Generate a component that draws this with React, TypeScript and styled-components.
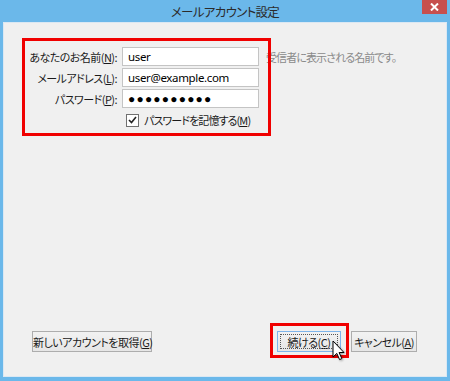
import React, {FC} from 'react';
import styled, {createGlobalStyle} from 'styled-components';

const GlobalStyle = createGlobalStyle`
  html, body {
    margin: 0;
    padding: 0;
    background: #fff;
  }
  body {
    font-family: "Noto Sans", "Noto Sans CJK JP", sans-serif;
  }
`;

const jp = `"Noto Sans CJK JP", "Noto Sans", sans-serif`;

const Window = styled.div`
  position: relative;
  width: 450px;
  height: 381px;
  box-sizing: border-box;
  background: #6bb8ea;
  padding: 0 3px 4px 3px;
  display: flex;
  flex-direction: column;
  overflow: hidden;
`;

const TitleBar = styled.div`
  height: 22px;
  flex: none;
  display: flex;
  align-items: center;
  justify-content: center;
  position: relative;
  .title {
    font-family: ${jp};
    font-size: 12.5px;
    font-feature-settings: "palt";
    color: #2b2b2b;
    letter-spacing: -0.7px;
    margin-top: 1px;
  }
`;

const CloseButton = styled.div`
  position: absolute;
  top: 0;
  right: 0;
  width: 25px;
  height: 14px;
  background: #c74f4e;
  display: flex;
  align-items: center;
  justify-content: center;
`;

const Client = styled.div`
  flex: 1;
  background: #f0f0f0;
  border: 1px solid #dbe8f3;
  display: flex;
  flex-direction: column;
`;

const Form = styled.div`
  display: grid;
  grid-template-columns: 113px 137px auto;
  column-gap: 5px;
  row-gap: 2px;
  padding: 24px 0 0 0;
  align-items: center;
`;

const Label = styled.label`
  font-family: ${jp};
  font-size: 11px;
  letter-spacing: -0.55px;
  font-feature-settings: "palt";
  color: #1a1a1a;
  text-align: right;
  white-space: nowrap;
  u {
    text-decoration: underline;
    text-underline-offset: 1px;
  }
`;

const TextBox = styled.div<{$dots?: boolean}>`
  height: 19px;
  box-sizing: border-box;
  border: 1px solid #c4c4c4;
  background: #fff;
  padding: 0 5px;
  display: flex;
  align-items: center;
  font-family: "Noto Sans", sans-serif;
  font-size: ${(p) => (p.$dots ? '12px' : '11.5px')};
  letter-spacing: ${(p) => (p.$dots ? '1.2px' : '-0.35px')};
  color: #000;
  white-space: nowrap;
  overflow: hidden;
`;

const Hint = styled.div`
  font-family: ${jp};
  font-size: 11px;
  letter-spacing: -0.9px;
  font-feature-settings: "palt";
  color: #8a8a8a;
  white-space: nowrap;
  padding-left: 2px;
`;

const CheckRow = styled.div`
  grid-column: 2 / 4;
  display: flex;
  align-items: center;
  gap: 5px;
  padding-left: 4px;
  margin-top: 2px;
  font-family: ${jp};
  font-size: 11px;
  letter-spacing: -0.9px;
  font-feature-settings: "palt";
  color: #1a1a1a;
  white-space: nowrap;
  u {
    text-decoration: underline;
    text-underline-offset: 1px;
  }
`;

const CheckBox = styled.div`
  width: 13px;
  height: 13px;
  box-sizing: border-box;
  border: 1px solid #707070;
  background: #fff;
  display: flex;
  align-items: center;
  justify-content: center;
`;

const Spacer = styled.div`
  flex: 1;
`;

const Footer = styled.div`
  display: flex;
  align-items: center;
  padding: 0 29px 24px 28px;
  gap: 10px;
`;

const Button = styled.button<{$default?: boolean; $w: number}>`
  width: ${(p) => p.$w}px;
  height: 21px;
  box-sizing: border-box;
  padding: 0;
  border: 1px solid ${(p) => (p.$default ? '#7eb4ea' : '#adadad')};
  background: linear-gradient(#f2f2f2, #e6e6e6);
  font-family: ${jp};
  font-size: 11px;
  letter-spacing: -0.5px;
  font-feature-settings: "palt";
  color: #1a1a1a;
  white-space: nowrap;
  text-align: center;
  position: relative;
  u {
    text-decoration: underline;
    text-underline-offset: 1px;
  }
  ${(p) =>
    p.$default &&
    `
    &::after {
      content: "";
      position: absolute;
      inset: 2px;
      border: 1px dotted #555;
    }
  `}
`;

const Highlight = styled.div<{$x: number; $y: number; $w: number; $h: number}>`
  position: absolute;
  left: ${(p) => p.$x}px;
  top: ${(p) => p.$y}px;
  width: ${(p) => p.$w}px;
  height: ${(p) => p.$h}px;
  box-sizing: border-box;
  border: 3px solid #f00000;
  pointer-events: none;
`;

const Cursor = styled.svg`
  position: absolute;
  left: 332px;
  top: 340px;
  filter: drop-shadow(1px 1px 1px rgba(0, 0, 0, 0.35));
`;

const Field: FC<{label: React.ReactNode; value: string; dots?: boolean; hint?: string}> = ({
  label,
  value,
  dots,
  hint,
}) => (
  <>
    <Label>{label}</Label>
    <TextBox $dots={dots}>{value}</TextBox>
    <Hint>{hint}</Hint>
  </>
);

const App: FC = () => (
  <>
    <GlobalStyle />
    <Window>
      <TitleBar>
        <span className="title">メールアカウント設定</span>
        <CloseButton>
          <svg width="9" height="8" viewBox="0 0 9 8">
            <path d="M1 0.5 L8 7.5 M8 0.5 L1 7.5" stroke="#fff" strokeWidth="2" />
          </svg>
        </CloseButton>
      </TitleBar>
      <Client>
        <Form>
          <Field
            label={
              <>
                あなたのお名前(<u>N</u>):
              </>
            }
            value="user"
            hint="受信者に表示される名前です。"
          />
          <Field
            label={
              <>
                メールアドレス(<u>L</u>):
              </>
            }
            value="user@example.com"
          />
          <Field
            label={
              <>
                パスワード(<u>P</u>):
              </>
            }
            value="●●●●●●●●●●"
            dots
          />
          <CheckRow>
            <CheckBox>
              <svg width="9" height="8" viewBox="0 0 9 8">
                <path d="M1 4 L3.5 6.5 L8 1" fill="none" stroke="#222" strokeWidth="1.6" />
              </svg>
            </CheckBox>
            <span>
              パスワードを記憶する(<u>M</u>)
            </span>
          </CheckRow>
        </Form>
        <Spacer />
        <Footer>
          <Button $w={120}>
            <span>
              新しいアカウントを取得(<u>G</u>)
            </span>
          </Button>
          <Spacer />
          <Button $w={64} $default>
            <span>
              続ける(<u>C</u>)
            </span>
          </Button>
          <Button $w={66}>
            <span>
              キャンセル(<u>A</u>)
            </span>
          </Button>
        </Footer>
      </Client>
      <Highlight $x={22} $y={38} $w={249} $h={98} />
      <Highlight $x={270} $y={323} $w={79} $h={35} />
      <Cursor width="14" height="22" viewBox="0 0 14 22">
        <path
          d="M1 1 L1 17 L4.8 13.4 L7.6 19.6 L9.8 18.6 L7.1 12.5 L12 12.5 Z"
          fill="#fff"
          stroke="#000"
          strokeWidth="1"
          strokeLinejoin="round"
        />
      </Cursor>
    </Window>
  </>
);

export default App;
